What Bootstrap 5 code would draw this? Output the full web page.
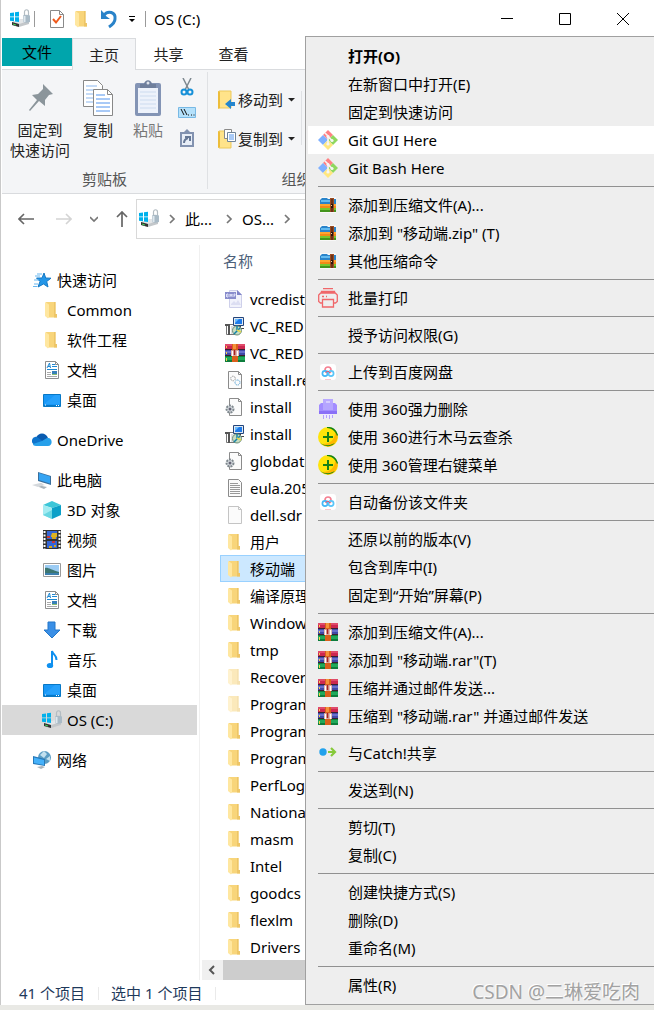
<!DOCTYPE html>
<html lang="zh-CN">
<head>
<meta charset="utf-8">
<meta name="viewport" content="width=device-width, initial-scale=1">
<title>OS (C:)</title>
<link href="https://cdn.jsdelivr.net/npm/bootstrap@5.3.0/dist/css/bootstrap.min.css" rel="stylesheet">
<style>
  body { font-family: "Noto Sans", "Noto Sans CJK SC", sans-serif; font-size: 15px; line-height: 20px; color: #000; background: #e9e9e5; overflow-x: hidden; }
  button { border: 0; background: none; padding: 0; color: inherit; font: inherit; line-height: inherit; white-space: nowrap; }
  a, a:hover { color: inherit; text-decoration: none; }
  svg { display: block; flex: none; }
  .explorer { background: #fff; border-left: 1px solid #c9c9c9; padding-left: 1px; overflow: hidden; }
  .titlebar { height: 38px; padding-right: 2px; }
  .quick { gap: 10px; margin: 0 9px 0 15px; }
  .vline { width: 1px; height: 16px; background: #9a9a9a; }
  .winctl { width: 58px; height: 38px; display: flex; align-items: center; justify-content: center; }
  .tabs { height: 32px; border-bottom: 1px solid #d9dbde; line-height: 30px; }
  .tabs button { width: 65px; height: 32px; color: #222; }
  .tabs .file-tab { width: 70px; height: 28px; background: #00a5ac; color: #000; line-height: 28px; }
  .tabs .home-tab { width: 64px; background: #f4f5f7; border: 1px solid #d9dbde; border-bottom: 0; line-height: 28px; }
  .ribbon { height: 124px; background: #f4f5f7; border-bottom: 1px solid #d9dbde; color: #222; }
  .rgroup { border-right: 1px solid #dfe1e4; margin: 2px 0 4px; display: flex; flex-direction: column; justify-content: space-between; }
  .clipgroup { width: 206px; }
  .orggroup { width: 178px; }
  .rlabel { color: #555; text-align: center; line-height: 20px; }
  .bigbtn { display: flex; flex-direction: column; align-items: center; height: 88px; }
  .bigbtn svg { margin-bottom: 4px; }
  .pin-btn { width: 76px; }
  .copy-btn { width: 40px; }
  .paste-btn { width: 60px; color: #777; }
  .smallbtns { gap: 11px; padding-top: 6px; }
  .orgbtns { gap: 19px; padding: 18px 4px 0 10px; }
  .orgbtns button { display: flex; align-items: center; gap: 2px; }
  .inner-line { width: 1px; height: 54px; background: #dfe1e4; margin-top: 19px; }
  .navrow { height: 46px; padding-top: 4px; }
  .navbtns { gap: 18px; padding: 0 8px 0 16px; }
  .address { height: 40px; border: 1px solid #d9d9d9; padding-left: 2px; }
  .side { width: 198px; border-right: 1px solid #f0f0f0; padding: 20px 2px 0 0; margin-top: 5px; }
  .side a { display: flex; align-items: center; height: 30px; padding-left: 30px; gap: 5px; }
  .side a.sub { padding-left: 40px; }
  .side a.on { background: #d9d9d9; }
  .side .gap-top { margin-top: 10px; }
  .files { margin-top: 12px; padding-left: 20px; }
  .files a { display: flex; align-items: center; height: 27px; gap: 5px; padding-left: 4px; border: 1px solid transparent; white-space: nowrap; }
  .files a.on { background: #cce8ff; border-color: #99d1ff; }
  .files .dim svg { opacity: .5; }
  .colhead { color: #4c607a; padding-left: 23px; height: 22px; margin-top: 11px; }
  .hbar { height: 20px; background: #cdcdcd; margin-left: 2px; }
  .hbar button { width: 21px; height: 20px; background: #f0f0f0; display: flex; align-items: center; justify-content: center; }
  .status { height: 25px; color: #1e395b; padding: 2px 0 0 17px; }
  .status .cell { border-right: 1px solid #eaeaea; height: 13px; line-height: 13px; padding-right: 13px; margin-right: 12px; }
  .ctx { position: absolute; top: 36px; left: 305px; right: 0; background: #eee; border: 1px solid #a0a0a0; border-right: 0; padding: 5px 0 5px 2px; box-shadow: 4px 4px 3px -1px rgba(0,0,0,.5); list-style: none; margin: 0; z-index: 5; }
  .ctx button { width: 100%; height: 28px; display: flex; align-items: center; padding-left: 10px; gap: 10px; line-height: 28px; }
  .ctx button.on { background: #fff; }
  .ctx hr { margin: 4px 0 4px 10px; border: 0; height: 1px; background: #909090; opacity: 1; }
  .ctx .blank { width: 20px; flex: none; }
  .watermark { position: absolute; top: 980px; right: 14px; z-index: 6; font-size: 19px; line-height: 24px; color: #a2a2a2; text-shadow: -1px -1px 0 #fff; }
</style>
</head>
<body class="position-relative">

<svg width="0" height="0" class="position-absolute" aria-hidden="true">
  <symbol id="drive" viewBox="0 0 20 20">
    <path d="M2 13l10-3 7 2v3l-10 3-7-2z" fill="#c3c7ca"/><path d="M2 13l10-3 7 2-10 3z" fill="#e3e6e8"/>
    <path d="M2 13l7 2v3l-7-2z" fill="#333"/><path d="M3 15l3 1" stroke="#3fd158"/>
    <path d="M0 4l4-.6v4H0zM5 3.300l4-.6v4.700H5zM0 8.300h4v4l-4-.5zM5 8.300h4V13l-4-.6z" fill="#00b1ec"/>
    <path d="M14.500 6V3c0-3 4-3 4 0v4" fill="none" stroke="#b3bcc2" stroke-width="1.200"/><path d="M13 6.500c2-1 4-1 7 0V13c-3 1-5 1-7 0z" fill="#a9bac6"/><path d="M14.500 7v6" stroke="#dfe8ee" stroke-width="2"/>
  </symbol>
  <symbol id="folder" viewBox="0 0 20 20">
    <path d="M4 2h9.500v12H15v3.500H6z" fill="#f8d57a"/><path d="M12 2h1.500v12H15v3.500h-3z" fill="#edc567"/><path d="M3 2l4 2.500V17l-1 1.500L3 16z" fill="#ffe7a0"/>
  </symbol>
  <symbol id="docs" viewBox="0 0 20 20">
    <path d="M3.500 1.500h10l3 3v14h-13z" fill="#fff" stroke="#8d8d8d"/><path d="M13.500 1.500v3h3" fill="none" stroke="#8d8d8d"/>
    <path d="M5 8l2.500-5 1 5M6 6.500h2M10 4.500h3M10 6.500h5M5 9.500h10" stroke="#1e88d2" fill="none"/><path d="M5 12.500h4M5 14.500h4M5 16.500h10" stroke="#aaa"/><path d="M10 11h5v4h-5z" fill="#3980b8"/><path d="M10 14h5v1h-5z" fill="#8abc70"/>
  </symbol>
  <symbol id="desk" viewBox="0 0 20 20"><path d="M1.500 4.500h17v12h-17z" fill="#1998f7" stroke="#0878c5"/><path d="M2 14L13 5h5v9z" fill="#35a9ff" opacity=".5"/><path d="M2 15h16v1H2z" fill="#0878c5"/><path d="M3 15h1M14 15.500h1M16 15.500h1" stroke="#fff"/></symbol>
  <symbol id="rar" viewBox="0 0 20 20">
    <path d="M0 1h20v6H0z" fill="#cc2850"/><path d="M0 1h20v2H0z" fill="#e04a6a"/><path d="M0 7h20v6H0z" fill="#4149a8"/><path d="M0 8h20v2H0z" fill="#6870cc"/><path d="M0 13h20v6H0z" fill="#0d7d3c"/><path d="M0 14h20v3H0z" fill="#20a95a"/>
    <path d="M0 6.500h20M0 12.500h20" stroke="#3a2030"/><path d="M1.500 3v2M1.500 9v2M1.500 15v3" stroke="#f4d04e"/>
    <path d="M7 1h6v18H7z" fill="#d9601c"/><path d="M8 1h3v5H8z" fill="#f5913a"/><path d="M6 7h8v6H6z" fill="#d5a09a"/><path d="M7.500 13V8M12.500 8v5" fill="none" stroke="#fff" stroke-width="1.500"/><path d="M9.500 7v5" stroke="#a82020" stroke-width="1.500"/>
  </symbol>
  <symbol id="setup" viewBox="0 0 20 20">
    <path d="M1.500 8.500h10v10h-10z" fill="#fff" stroke="#777"/><path d="M0 8h5v2H0zM3 10h2v9H3z" fill="#555"/><path d="M6 10h4v8H6z" fill="#ddd"/>
    <path d="M8.500 1.500h10v8h-10z" fill="#dfe8f2" stroke="#24457a"/><path d="M10 3h7v5h-7z" fill="#1e7bea"/><path d="M10 3h4l-4 4z" fill="#6bbcff"/><path d="M12 10h4v2h-4zM10 12h9v1h-9z" fill="#444"/>
    <circle cx="12" cy="14.500" r="4.500" fill="#c7dcc4" stroke="#6d8f79"/><path d="M9 18l6-6M12 10v4" stroke="#1684a6" stroke-width="1.500"/><path d="M12 14l4 2" stroke="#e6d84a" stroke-width="1.500"/>
  </symbol>
  <symbol id="paper" viewBox="0 0 20 20"><path d="M3.500 1.500h10l3 3v14h-13z" fill="#fbfbfb" stroke="#c4c4c4"/><path d="M13.500 1.500v3h3" fill="none" stroke="#c4c4c4"/></symbol>
  <symbol id="bmp" viewBox="0 0 20 20"><path d="M4.500 1.500h8l4 4v13h-12z" fill="#f1f2fb" stroke="#ced0ea"/><path d="M12 1v5h5z" fill="#8084c8"/><path d="M0 3h11v7H0z" fill="#898dcc"/><path d="M1.500 5v3M2 5h1v3H2M5 8V5l1 2 1-2v3M9 8V5h1v1.500H9" fill="none" stroke="#dfe1f8"/><path d="M6 15l3-3 2 2 2-3 3 5H6z" fill="#dcdef2"/></symbol>
  <symbol id="reg" viewBox="0 0 20 20"><path d="M3.500 1.500h10l3 3v14h-13z" fill="#fbfbfb" stroke="#8b8b8b"/><path d="M13.500 1.500v3h3" fill="none" stroke="#8b8b8b"/><circle cx="8" cy="8.500" r="2.300" fill="none" stroke="#999" stroke-dasharray="1.500 .7"/><circle cx="12.500" cy="12.500" r="2.500" fill="none" stroke="#5aa4d4" stroke-dasharray="1.500 .7"/></symbol>
  <symbol id="ini" viewBox="0 0 20 20"><path d="M4.500 1.500h9l3 3v14h-12z" fill="#fbfbfb" stroke="#8b8b8b"/><path d="M13.500 1.500v3h3" fill="none" stroke="#8b8b8b"/><circle cx="5" cy="12" r="3.500" fill="#d7dce0" stroke="#7f888e" stroke-width="2" stroke-dasharray="2 1"/><circle cx="5" cy="12" r="1.500" fill="#667"/></symbol>
  <symbol id="txt" viewBox="0 0 20 20"><path d="M3.500 1.500h10l3 3v14h-13z" fill="#fbfbfb" stroke="#8b8b8b"/><path d="M5 5.500h8M5 7.500h10M5 9.500h10M5 11.500h10M5 13.500h10M5 15.500h10" stroke="#999"/></symbol>
  <symbol id="git" viewBox="0 0 20 20">
    <path d="M10 0l5 5-5 5-5-5z" fill="#ff8083"/><path d="M5 5l5 5-5 5-5-5z" fill="#7fb0ff"/><path d="M15 5l5 5-5 5-5-5z" fill="#8fd75f"/><path d="M10 10l5 5-5 5-5-5z" fill="#ffe780"/>
    <path d="M7 3l3 3v8M10 6.500l4 4" fill="none" stroke="#f6f6f6" stroke-width="1.600"/><circle cx="10" cy="6.500" r="1.600" fill="#f6f6f6"/><circle cx="14" cy="10.500" r="1.600" fill="#f6f6f6"/><circle cx="10" cy="14" r="1.600" fill="#f6f6f6"/>
  </symbol>
  <symbol id="zip" viewBox="0 0 20 20">
    <path d="M2 2h16v16H2z" fill="#f8f8f8"/><path d="M2 5l2-2h5l1 1h8v5H2z" fill="#2a84ca"/><path d="M3 5h12v2H3z" fill="#62baf0"/><path d="M2 9h16v4H2z" fill="#f28a16"/><path d="M2 9h16v2H2z" fill="#ffa62e"/><path d="M2 13h16v4H2z" fill="#43941c"/><path d="M2 13h16v2H2z" fill="#79c62e"/>
    <path d="M12 3h4v14h-4z" fill="#9a4a20"/><path d="M14 4v13" stroke="#3b1a10"/><path d="M13 9h2v4h-2z" fill="#2c150c"/><path d="M13 10.500h1" stroke="#ead29a"/>
  </symbol>
  <symbol id="netdisk" viewBox="0 0 20 20"><rect x="2" y="2" width="16" height="16" rx="3" fill="#fff"/><circle cx="10" cy="8" r="3" fill="none" stroke="#f57f91" stroke-width="1.700"/><circle cx="7" cy="11.500" r="2.600" fill="none" stroke="#44b8f7" stroke-width="1.700"/><circle cx="13" cy="11.500" r="2.600" fill="none" stroke="#5ac5f8" stroke-width="1.700"/><path d="M8 10l2-1 2 2" fill="none" stroke="#ee5270"/><path d="M7 17.500h6" stroke="#f7c8d0"/></symbol>
  <symbol id="plus360" viewBox="0 0 20 20"><circle cx="10" cy="10" r="10" fill="#ffe40a"/><path d="M17 3a10 10 0 0 1-4 16c-3 1-6 0-8-2 7 0 13-5 12-14z" fill="#ffb800"/><path d="M9 0a10 10 0 0 1 11 8l-1 1c-1-4-5-8-10-8z" fill="#128416"/><path d="M1 14c2 4 7 5 11 4l5-2a10 10 0 0 1-16-2z" fill="#128416"/><path d="M10 5v10M5 10h10" stroke="#168018" stroke-width="2"/></symbol>
  <symbol id="fwd" viewBox="0 0 10 10"><path d="M3 1l4 4-4 4" fill="none" stroke="#777" stroke-width="1.700"/></symbol>
</svg>

<main class="explorer d-flex flex-column">
  <header class="titlebar d-flex align-items-center">
    <svg class="ms-2 me-1" width="20" height="20"><use href="#drive"/></svg>
    <span class="vline"></span>
    <div class="quick d-flex align-items-center">
      <button aria-label="属性"><svg width="14" height="18" viewBox="0 0 14 18"><path d="M.500.500h9l4 4v13H.500z" fill="#fff" stroke="#8a8a8a"/><path d="M9.500.500v4h4" fill="none" stroke="#8a8a8a"/><path d="M3 9l3 3.500L11 6" fill="none" stroke="#ef5a1c" stroke-width="2"/></svg></button>
      <button aria-label="新建文件夹"><svg width="16" height="20" viewBox="2 0 16 20"><use href="#folder" width="20" height="20"/></svg></button>
      <button aria-label="撤销"><svg width="18" height="20" viewBox="0 0 18 20"><path d="M4 6c4-5 12-3 11 4 0 4-3 6-6 8" fill="none" stroke="#2a83c9" stroke-width="3"/><path d="M1 1v9h9L6 7 4 4z" fill="#2a83c9"/></svg></button>
      <button aria-label="自定义"><svg width="8" height="8" viewBox="0 0 8 8"><path d="M1 1.500h6" stroke="#000"/><path d="M1 4h6L4 7z"/></svg></button>
    </div>
    <span class="vline me-2"></span>
    <span class="me-auto">OS (C:)</span>
    <button class="winctl" aria-label="最小化"><svg width="12" height="12"><path d="M0 5.500h12" stroke="#000"/></svg></button>
    <button class="winctl" aria-label="最大化"><svg width="12" height="12"><path d="M.500.500h11v11H.500z" fill="none" stroke="#000"/></svg></button>
    <button class="winctl" aria-label="关闭"><svg width="12" height="12"><path d="M0 0l12 12M12 0L0 12" stroke="#000" fill="none"/></svg></button>
  </header>

  <nav class="tabs d-flex">
    <button class="file-tab">文件</button><button class="home-tab">主页</button><button>共享</button><button>查看</button>
  </nav>

  <section class="ribbon d-flex">
    <div class="rgroup clipgroup flex-shrink-0">
      <div class="d-flex">
        <button class="bigbtn pin-btn pt-2"><svg width="30" height="36" viewBox="0 0 30 36"><path d="M18 4l10 10-4 1-4 5 0 6-6-5-9 10-1-1 8-10-5-5 6-1 5-5z" fill="#8b959b"/></svg>固定到<br>快速访问</button>
        <button class="bigbtn copy-btn pt-2"><svg width="32" height="36" viewBox="0 0 32 36"><path d="M1.500.500h14l5 5v21h-19z" fill="#fff" stroke="#888"/><path d="M4 6h11M4 10h14M4 14h14M4 18h14M4 22h14" stroke="#8bb7ee"/><path d="M11.500 9.500h14l5 5v21h-19z" fill="#fff" stroke="#888"/><path d="M25.500 9.500v5h5" fill="none" stroke="#888"/><path d="M14 15h9M14 19h14M14 23h14M14 27h14M14 31h14" stroke="#5294ee"/></svg>复制</button>
        <button class="bigbtn paste-btn pt-2"><svg width="28" height="36" viewBox="0 0 28 36"><rect x="1" y="3" width="26" height="33" rx="2" fill="#8394b5"/><path d="M4 8h20v25H4z" fill="#edf2fb"/><path d="M6 12h16M6 16h16M6 20h16M6 24h16M6 28h16" stroke="#ccdbef"/><path d="M6 4h4c1-5 7-5 8 0h4v4H6z" fill="#6f7f9c"/><circle cx="14" cy="3" r="1.500" fill="#dfe4ec"/></svg>粘贴</button>
        <div class="smallbtns d-flex flex-column align-items-center">
          <button aria-label="剪切"><svg width="18" height="18" viewBox="0 0 18 18"><path d="M5 0l6 12M13 0L7 12" stroke="#7e8990" stroke-width="1.500"/><circle cx="6" cy="14" r="2.500" fill="none" stroke="#1690d8" stroke-width="2"/><circle cx="12" cy="14" r="2.500" fill="none" stroke="#1690d8" stroke-width="2"/></svg></button>
          <button aria-label="复制路径"><svg width="18" height="11" viewBox="0 0 18 11"><path d="M.500.500h17v10H.500z" fill="#b5e1fb" stroke="#78b9e5"/><path d="M3 2l3 6M6 2l3 6M10 8h1M13 8h1M15.500 8h1" stroke="#111"/></svg></button>
          <button aria-label="粘贴快捷方式"><svg width="14" height="18" viewBox="0 0 14 18"><path d="M0 3h14v15H0z" fill="#8292b0"/><path d="M2 5h10v11H2z" fill="#e8eef7"/><path d="M3 4l4-4 4 4z" fill="#8292b0"/><path d="M4 14c0-3 1-4 4-5M5 8h5v4" fill="none" stroke="#667896" stroke-width="2"/></svg></button>
        </div>
      </div>
      <div class="rlabel">剪贴板</div>
    </div>
    <div class="rgroup orggroup flex-shrink-0">
      <div class="d-flex">
        <div class="orgbtns d-flex flex-column">
          <button><svg width="18" height="20" viewBox="0 0 18 20"><path d="M1 1h12v17H1z" fill="#ffe38a" stroke="#edc95a"/><path d="M0 1l2 1v16l-2 1z" fill="#edbd3a"/><path d="M17 12h-4V9l-6 5 6 5v-3h4z" fill="#2485ce"/></svg>移动到<svg width="12" height="8"><path d="M3 2h7L6.500 5.500z" fill="#222"/></svg></button>
          <button><svg width="18" height="20" viewBox="0 0 18 20"><path d="M1 2h12v17H1z" fill="#ffe38a" stroke="#edc95a"/><path d="M0 2l2 1v15l-2 1z" fill="#edbd3a"/><path d="M6.500.500h7v9h-7z" fill="#fff" stroke="#8a8a8a"/><path d="M9.500 3.500h8v9h-8z" fill="#fff" stroke="#708498"/><path d="M11 6h5M11 8h5M11 10h5" stroke="#5294ee"/></svg>复制到<svg width="12" height="8"><path d="M3 2h7L6.500 5.500z" fill="#222"/></svg></button>
        </div>
        <span class="inner-line"></span>
      </div>
      <div class="rlabel">组织</div>
    </div>
  </section>

  <div class="navrow d-flex align-items-center">
    <div class="navbtns d-flex align-items-center">
      <button aria-label="后退"><svg width="16" height="12" viewBox="0 0 16 12"><path d="M16 6H1M6 1L1 6l5 5" fill="none" stroke="#666" stroke-width="1.600"/></svg></button>
      <button class="ms-1" aria-label="前进"><svg width="16" height="12" viewBox="0 0 16 12"><path d="M0 6h15M10 1l5 5-5 5" fill="none" stroke="#d4d4d4" stroke-width="1.600"/></svg></button>
      <button aria-label="历史"><svg width="8" height="8" viewBox="0 0 8 8"><path d="M0 2l4 4 4-4" fill="none" stroke="#777" stroke-width="1.600"/></svg></button>
      <button aria-label="向上"><svg width="12" height="16" viewBox="0 0 12 16"><path d="M6 16V1M1 6l5-5 5 5" fill="none" stroke="#666" stroke-width="1.700"/></svg></button>
    </div>
    <div class="address d-flex align-items-center flex-grow-1">
      <svg width="20" height="20"><use href="#drive"/></svg>
      <svg class="ms-2 me-2" width="10" height="10"><use href="#fwd"/></svg>
      <button>此...</button>
      <svg class="ms-2 me-2 ps-1" width="14" height="10"><use href="#fwd"/></svg>
      <button>OS...</button>
      <svg class="ms-2" width="10" height="10"><use href="#fwd"/></svg>
    </div>
  </div>

  <div class="d-flex">
    <nav class="side flex-shrink-0">
      <a href="#"><svg width="20" height="20" viewBox="0 0 20 20"><path d="M12 3l1.700 5 5.300.200-4.300 3.300L16 17l-4.500-3L6 17l2-5.500L4.500 8H10z" fill="#2396e8" stroke="#1579c5"/><path d="M5 4h5M3 6h5M2 10h5M2 14h4M1 16.500h4" stroke="#69b7ef"/></svg>快速访问</a>
      <a href="#" class="sub"><svg width="20" height="20"><use href="#folder"/></svg>Common</a>
      <a href="#" class="sub"><svg width="20" height="20"><use href="#folder"/></svg>软件工程</a>
      <a href="#" class="sub"><svg width="20" height="20"><use href="#docs"/></svg>文档</a>
      <a href="#" class="sub"><svg width="20" height="20"><use href="#desk"/></svg>桌面</a>
      <a href="#" class="gap-top"><svg width="20" height="20" viewBox="0 0 20 20"><path d="M4 8c2-6 10-6 12 0l3 4-15 1z" fill="#0a5bb0"/><path d="M3 15a4 4 0 0 1 2-8l10 7z" fill="#0e74cc"/><path d="M15 8c6-1 6 8 1 8H4c-2 0-3-1-3-2l9-3z" fill="#27a0ea"/></svg>OneDrive</a>
      <a href="#" class="gap-top"><svg width="20" height="20" viewBox="0 0 20 20"><path d="M6 2l13 4v9L6 11z" fill="#3a6f9c"/><path d="M7 3l11 3.500v7L7 10z" fill="#35a4f3"/><path d="M8 13l3 1-1 2 5 1-3 2-5-2z" fill="#aab4bb"/><path d="M0 15l8-2 5 2-7 2z" fill="#d4d8dc"/></svg>此电脑</a>
      <a href="#" class="sub"><svg width="20" height="20" viewBox="0 0 20 20"><path d="M10 1l9 4-9 3-9-3z" fill="#3cc6d8"/><path d="M1 5l9 3v11l-9-4z" fill="#a3ecf2"/><path d="M19 5l-9 3v11l9-4z" fill="#0ba0c8"/><path d="M1 15l9-5v9z" fill="#69d7e2"/></svg>3D 对象</a>
      <a href="#" class="sub"><svg width="20" height="20" viewBox="0 0 20 20"><path d="M1 0h18v19H1z" fill="#333"/><path d="M2.500 1v18M17.500 1v18" stroke="#fff" stroke-width="2" stroke-dasharray="2 1.500"/><path d="M5 1h10v8H5zM5 11h10v7H5z" fill="#3566d6"/><path d="M9 6l1-3h5v4H9z" fill="#e0b421"/><path d="M5 6h3v2H5zM10 11h3v2h-3z" fill="#c83838"/><path d="M10 7h4v2h-4zM7 16h3v2H7zM12 15h2v2h-2z" fill="#d5a51e"/></svg>视频</a>
      <a href="#" class="sub"><svg width="20" height="20" viewBox="0 0 20 20"><path d="M1.500 3.500h17v13h-17z" fill="#fff" stroke="#9a9a9a"/><path d="M3 5h14v10H3z" fill="#9cccf4"/><path d="M3 8c3-1 6 2 14 4v3H3z" fill="#3c7672"/><path d="M3 13h14v2H3z" fill="#3c7fae"/></svg>图片</a>
      <a href="#" class="sub"><svg width="20" height="20"><use href="#docs"/></svg>文档</a>
      <a href="#" class="sub"><svg width="20" height="20" viewBox="0 0 20 20"><path d="M6 2h7v8h5l-8 8-8-8h4z" fill="#3a8fe6" stroke="#2377c9"/></svg>下载</a>
      <a href="#" class="sub"><svg width="20" height="20" viewBox="0 0 20 20"><ellipse cx="8" cy="15.500" rx="3.200" ry="2.600" fill="#0f90ef"/><path d="M10 15V1c1 4 5 4 4.500 9" fill="none" stroke="#0f90ef" stroke-width="2"/></svg>音乐</a>
      <a href="#" class="sub"><svg width="20" height="20"><use href="#desk"/></svg>桌面</a>
      <a href="#" class="sub on"><svg width="20" height="20"><use href="#drive"/></svg>OS (C:)</a>
      <a href="#" class="gap-top"><svg width="20" height="20" viewBox="0 0 20 20"><circle cx="12.500" cy="7.500" r="6.500" fill="#5b9cc3"/><path d="M8 5l4-4 3 3-3 4zM14 9l4-3v5z" fill="#c2e0ef"/><path d="M1 6l12 3v7L1 14z" fill="#2779b9"/><path d="M2 7.500l10 2.500v5L2 13z" fill="#45b1fa"/><path d="M5 17l5-1 3 1-4 2z" fill="#aab4bb"/></svg>网络</a>
    </nav>

    <section class="flex-grow-1 overflow-hidden">
      <div class="colhead">名称</div>
      <div class="files">
        <a href="#"><svg width="20" height="20"><use href="#bmp"/></svg>vcredist</a>
        <a href="#"><svg width="20" height="20"><use href="#setup"/></svg>VC_RED</a>
        <a href="#"><svg width="20" height="20"><use href="#rar"/></svg>VC_RED</a>
        <a href="#"><svg width="20" height="20"><use href="#reg"/></svg>install.res</a>
        <a href="#"><svg width="20" height="20"><use href="#ini"/></svg>install</a>
        <a href="#"><svg width="20" height="20"><use href="#setup"/></svg>install</a>
        <a href="#"><svg width="20" height="20"><use href="#ini"/></svg>globdata</a>
        <a href="#"><svg width="20" height="20"><use href="#txt"/></svg>eula.2052</a>
        <a href="#"><svg width="20" height="20"><use href="#paper"/></svg>dell.sdr</a>
        <a href="#"><svg width="20" height="20"><use href="#folder"/></svg>用户</a>
        <a href="#" class="on"><svg width="20" height="20"><use href="#folder"/></svg>移动端</a>
        <a href="#"><svg width="20" height="20"><use href="#folder"/></svg>编译原理</a>
        <a href="#"><svg width="20" height="20"><use href="#folder"/></svg>Windows</a>
        <a href="#"><svg width="20" height="20"><use href="#folder"/></svg>tmp</a>
        <a href="#" class="dim"><svg width="20" height="20"><use href="#folder"/></svg>Recovery</a>
        <a href="#" class="dim"><svg width="20" height="20"><use href="#folder"/></svg>Program</a>
        <a href="#"><svg width="20" height="20"><use href="#folder"/></svg>Program</a>
        <a href="#"><svg width="20" height="20"><use href="#folder"/></svg>Program</a>
        <a href="#"><svg width="20" height="20"><use href="#folder"/></svg>PerfLogs</a>
        <a href="#"><svg width="20" height="20"><use href="#folder"/></svg>National</a>
        <a href="#"><svg width="20" height="20"><use href="#folder"/></svg>masm</a>
        <a href="#"><svg width="20" height="20"><use href="#folder"/></svg>Intel</a>
        <a href="#"><svg width="20" height="20"><use href="#folder"/></svg>goodcs</a>
        <a href="#"><svg width="20" height="20"><use href="#folder"/></svg>flexlm</a>
        <a href="#"><svg width="20" height="20"><use href="#folder"/></svg>Drivers</a>
      </div>
      <div class="hbar"><button aria-label="向左滚动"><svg width="12" height="10" viewBox="0 0 12 10"><path d="M7 1L3 5l4 4" fill="none" stroke="#555" stroke-width="2"/></svg></button></div>
    </section>
  </div>

  <footer class="status d-flex align-items-center">
    <span class="cell">41 个项目</span><span class="cell">选中 1 个项目</span>
  </footer>
</main>

<ul class="ctx">
  <li><button><span class="blank"></span><b>打开(O)</b></button></li>
  <li><button><span class="blank"></span>在新窗口中打开(E)</button></li>
  <li><button><span class="blank"></span>固定到快速访问</button></li>
  <li><button class="on"><svg width="20" height="20"><use href="#git"/></svg>Git GUI Here</button></li>
  <li><button><svg width="20" height="20"><use href="#git"/></svg>Git Bash Here</button></li>
  <li><hr></li>
  <li><button><svg width="20" height="20"><use href="#zip"/></svg>添加到压缩文件(A)...</button></li>
  <li><button><svg width="20" height="20"><use href="#zip"/></svg>添加到 "移动端.zip" (T)</button></li>
  <li><button><svg width="20" height="20"><use href="#zip"/></svg>其他压缩命令</button></li>
  <li><hr></li>
  <li><button><svg width="20" height="20" viewBox="0 0 20 20"><path d="M5 .700h10M3.500 5V3.500h13V5M4.500 15H2.500l-1.800-1.500V7l2-2h14.600l2 2v6.500L17.500 15h-2M4.500 11.500h11v7.500h-11zM4 8.500h2M8 8.500h1" fill="none" stroke="#f0676a" stroke-width="1.300"/></svg>批量打印</button></li>
  <li><hr></li>
  <li><button><span class="blank"></span>授予访问权限(G)</button></li>
  <li><hr></li>
  <li><button><svg width="20" height="20"><use href="#netdisk"/></svg>上传到百度网盘</button></li>
  <li><hr></li>
  <li><button><svg width="20" height="20" viewBox="0 0 20 20"><path d="M5 0h10v6H5z" fill="#b9a9ff"/><path d="M3 4h14l2 2v8H1V6z" fill="#a28cff"/><path d="M5 4h10v7H5z" fill="#b5a5ff"/><path d="M1 12h18v3H1z" fill="#8a70f7"/><path d="M8 3h4" stroke="#f2efff"/><path d="M5 15h10v4H5z" fill="#eee9ff"/><path d="M5.500 16v4M8.500 16v3M11.500 16v4M14.500 16v3" stroke="#b3a2fb"/></svg>使用 360强力删除</button></li>
  <li><button><svg width="20" height="20"><use href="#plus360"/></svg>使用 360进行木马云查杀</button></li>
  <li><button><svg width="20" height="20"><use href="#plus360"/></svg>使用 360管理右键菜单</button></li>
  <li><hr></li>
  <li><button><svg width="20" height="20"><use href="#netdisk"/></svg>自动备份该文件夹</button></li>
  <li><hr></li>
  <li><button><span class="blank"></span>还原以前的版本(V)</button></li>
  <li><button><span class="blank"></span>包含到库中(I)</button></li>
  <li><button><span class="blank"></span>固定到“开始”屏幕(P)</button></li>
  <li><hr></li>
  <li><button><svg width="20" height="20"><use href="#rar"/></svg>添加到压缩文件(A)...</button></li>
  <li><button><svg width="20" height="20"><use href="#rar"/></svg>添加到 "移动端.rar"(T)</button></li>
  <li><button><svg width="20" height="20"><use href="#rar"/></svg>压缩并通过邮件发送...</button></li>
  <li><button><svg width="20" height="20"><use href="#rar"/></svg>压缩到 "移动端.rar" 并通过邮件发送</button></li>
  <li><hr></li>
  <li><button><svg width="20" height="20" viewBox="0 0 20 20"><circle cx="5" cy="9" r="3.700" fill="#22a2ec"/><path d="M10 9h7M13 5l4 4-4 4" fill="none" stroke="#86c93a" stroke-width="2.200"/></svg>与Catch!共享</button></li>
  <li><hr></li>
  <li><button><span class="blank"></span>发送到(N)</button></li>
  <li><hr></li>
  <li><button><span class="blank"></span>剪切(T)</button></li>
  <li><button><span class="blank"></span>复制(C)</button></li>
  <li><hr></li>
  <li><button><span class="blank"></span>创建快捷方式(S)</button></li>
  <li><button><span class="blank"></span>删除(D)</button></li>
  <li><button><span class="blank"></span>重命名(M)</button></li>
  <li><hr></li>
  <li><button><span class="blank"></span>属性(R)</button></li>
</ul>
<div class="watermark">CSDN @二琳爱吃肉</div>

<script src="https://cdn.jsdelivr.net/npm/bootstrap@5.3.0/dist/js/bootstrap.bundle.min.js"></script>
</body>
</html>
